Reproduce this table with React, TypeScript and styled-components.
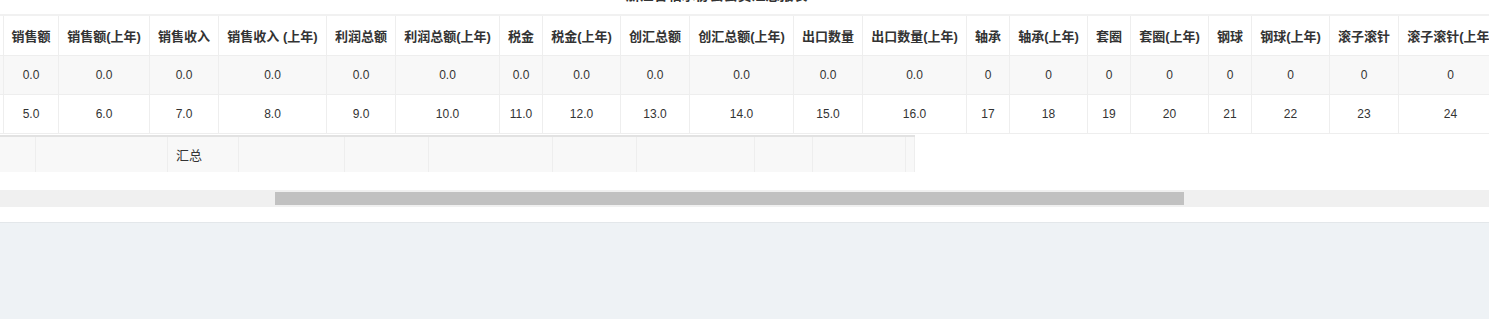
import React, { useLayoutEffect, useRef } from 'react';
import styled, { createGlobalStyle } from 'styled-components';

const GlobalStyle = createGlobalStyle`
  html, body {
    margin: 0;
    padding: 0;
    background: #eef2f5;
    font-family: "Liberation Sans", "Noto Sans CJK SC", sans-serif;
    color: #333;
  }
`;

type Column = { title: string; width: number };

// leading columns sit left of the scrolled viewport
const columns: Column[] = [
  { title: '序号', width: 60 },
  { title: '会员单位', width: 240 },
  { title: '年度', width: 70 },
  { title: '月份', width: 83 },
  { title: '销售额', width: 55 },
  { title: '销售额(上年)', width: 91 },
  { title: '销售收入', width: 69 },
  { title: '销售收入 (上年)', width: 108 },
  { title: '利润总额', width: 69 },
  { title: '利润总额(上年)', width: 104 },
  { title: '税金', width: 43 },
  { title: '税金(上年)', width: 78 },
  { title: '创汇总额', width: 69 },
  { title: '创汇总额(上年)', width: 104 },
  { title: '出口数量', width: 69 },
  { title: '出口数量(上年)', width: 104 },
  { title: '轴承', width: 43 },
  { title: '轴承(上年)', width: 78 },
  { title: '套圈', width: 43 },
  { title: '套圈(上年)', width: 78 },
  { title: '钢球', width: 43 },
  { title: '钢球(上年)', width: 78 },
  { title: '滚子滚针', width: 69 },
  { title: '滚子滚针(上年)', width: 104 },
  { title: '其他', width: 43 },
  { title: '其他(上年)', width: 78 },
  { title: '从业人数', width: 69 },
  { title: '从业人数(上年)', width: 104 },
  { title: '研发投入', width: 69 },
  { title: '研发投入(上年)', width: 124 },
];

const rows: string[][] = [
  ['1', '', '2023', '1', '0.0', '0.0', '0.0', '0.0', '0.0', '0.0', '0.0', '0.0', '0.0', '0.0', '0.0', '0.0',
    '0', '0', '0', '0', '0', '0', '0', '0', '0', '0', '0', '0', '0', '0'],
  ['2', '', '2023', '2', '5.0', '6.0', '7.0', '8.0', '9.0', '10.0', '11.0', '12.0', '13.0', '14.0', '15.0', '16.0',
    '17', '18', '19', '20', '21', '22', '23', '24', '25', '26', '27', '28', '29', '30'],
];

const footerCells = [485, 132, 71, 106, 84, 124, 84, 118, 58, 93, 9];

const SCROLL_LEFT = 449;

const Panel = styled.div`
  background: #fff;
  border-bottom: 1px solid #e3e7ea;
  height: 222px;
  overflow: hidden;
`;

const TitleClip = styled.div`
  height: 14px;
  overflow: hidden;
`;

const Title = styled.div`
  margin-top: -15px;
  padding-right: 56px;
  text-align: center;
  font-size: 14px;
  font-weight: bold;
  line-height: 20px;
  color: #333;
`;

const Viewport = styled.div`
  overflow: hidden;
  width: 100%;
`;

const Grid = styled.div`
  display: inline-block;
  vertical-align: top;
  border-top: 2px solid #f1f1f1;
`;

const Row = styled.div<{ $striped?: boolean; $head?: boolean }>`
  display: flex;
  height: ${(p) => (p.$head ? 39 : 38)}px;
  background: ${(p) => (p.$striped ? '#f8f8f8' : '#fff')};
  border-bottom: 1px solid #eeeeee;
`;

const Cell = styled.div<{ $head?: boolean }>`
  flex: none;
  box-sizing: border-box;
  border-right: 1px solid #eeeeee;
  display: flex;
  align-items: center;
  justify-content: center;
  white-space: nowrap;
  overflow: hidden;
  font-size: ${(p) => (p.$head ? 13 : 12)}px;
  font-weight: ${(p) => (p.$head ? 'bold' : 'normal')};
  color: #333;
`;

const Footer = styled.div`
  display: flex;
  width: fit-content;
  margin-top: 1px;
  height: 35px;
  border-top: 2px solid #e2e2e2;
  background: #f8f8f8;
`;

const FooterCell = styled.div`
  flex: none;
  box-sizing: border-box;
  border-right: 1px solid #eeeeee;
  display: flex;
  align-items: center;
  padding-left: 8px;
  font-size: 13px;
  color: #333;
`;

const ScrollTrack = styled.div`
  margin-top: 18px;
  height: 17px;
  background: #f0f0f0;
  display: flex;
  align-items: center;
`;

const ScrollThumb = styled.div`
  margin-left: 275px;
  width: 909px;
  height: 13px;
  background: #c1c1c1;
`;

const App: React.FC = () => {
  const viewRef = useRef<HTMLDivElement>(null);

  useLayoutEffect(() => {
    if (viewRef.current) viewRef.current.scrollLeft = SCROLL_LEFT;
  }, []);

  return (
    <>
      <GlobalStyle />
      <Panel>
        <TitleClip>
          <Title>浙江省轴承协会会员汇总报表</Title>
        </TitleClip>
        <Viewport ref={viewRef}>
          <Grid>
            <Row $head>
              {columns.map((c) => (
                <Cell $head key={c.title} style={{ width: c.width }}>
                  {c.title}
                </Cell>
              ))}
            </Row>
            {rows.map((r, i) => (
              <Row key={i} $striped={i === 0}>
                {r.map((v, j) => (
                  <Cell key={j} style={{ width: columns[j].width }}>
                    {v}
                  </Cell>
                ))}
              </Row>
            ))}
            <Footer>
              {footerCells.map((w, i) => (
                <FooterCell key={i} style={{ width: w }}>
                  {i === 2 ? '汇总' : ''}
                </FooterCell>
              ))}
            </Footer>
          </Grid>
        </Viewport>
        <ScrollTrack>
          <ScrollThumb />
        </ScrollTrack>
      </Panel>
    </>
  );
};

export default App;
